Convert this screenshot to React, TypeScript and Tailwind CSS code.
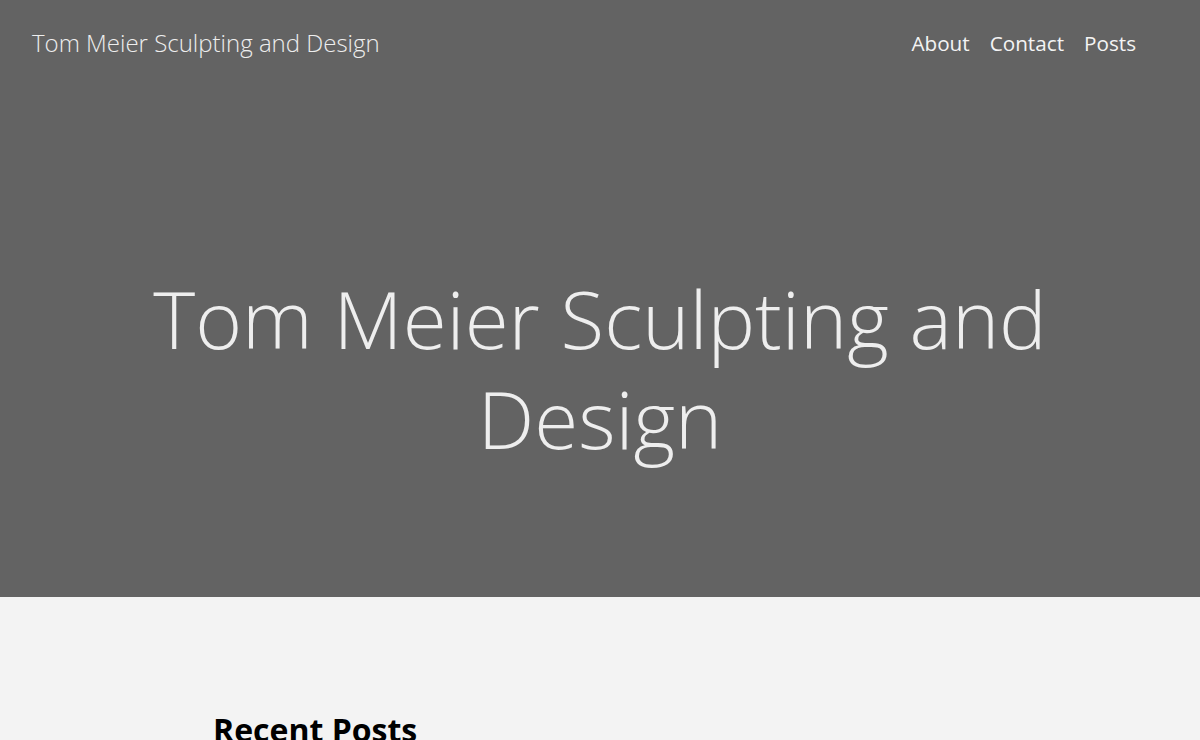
const navLinks = ["About", "Contact", "Posts"];

export default function App() {
  return (
    <div className="min-h-[740px] bg-[#f3f3f3] font-['Open_Sans',sans-serif]">
      <section className="flex h-[597px] flex-col bg-[#636363]">
        <header className="flex h-[86px] items-center justify-between pl-[32px] pr-[64px]">
          <a href="#" className="text-[24px] leading-[32px] font-light text-[#eeeeee]">
            Tom Meier Sculpting and Design
          </a>
          <nav className="flex gap-[20px]">
            {navLinks.map((link) => (
              <a key={link} href="#" className="text-[20.7px] leading-[28px] text-[#f4f4f4]">
                {link}
              </a>
            ))}
          </nav>
        </header>
        <div className="flex justify-center pt-[182px]">
          <h1 className="max-w-[960px] text-center text-[80px] leading-[100px] font-light text-[#eeeeee]">
            Tom Meier Sculpting and Design
          </h1>
        </div>
      </section>
      <main className="mx-auto w-[774px] pt-[112px]">
        <h2 className="text-[32px] leading-[42px] font-bold text-black">Recent Posts</h2>
      </main>
    </div>
  );
}
